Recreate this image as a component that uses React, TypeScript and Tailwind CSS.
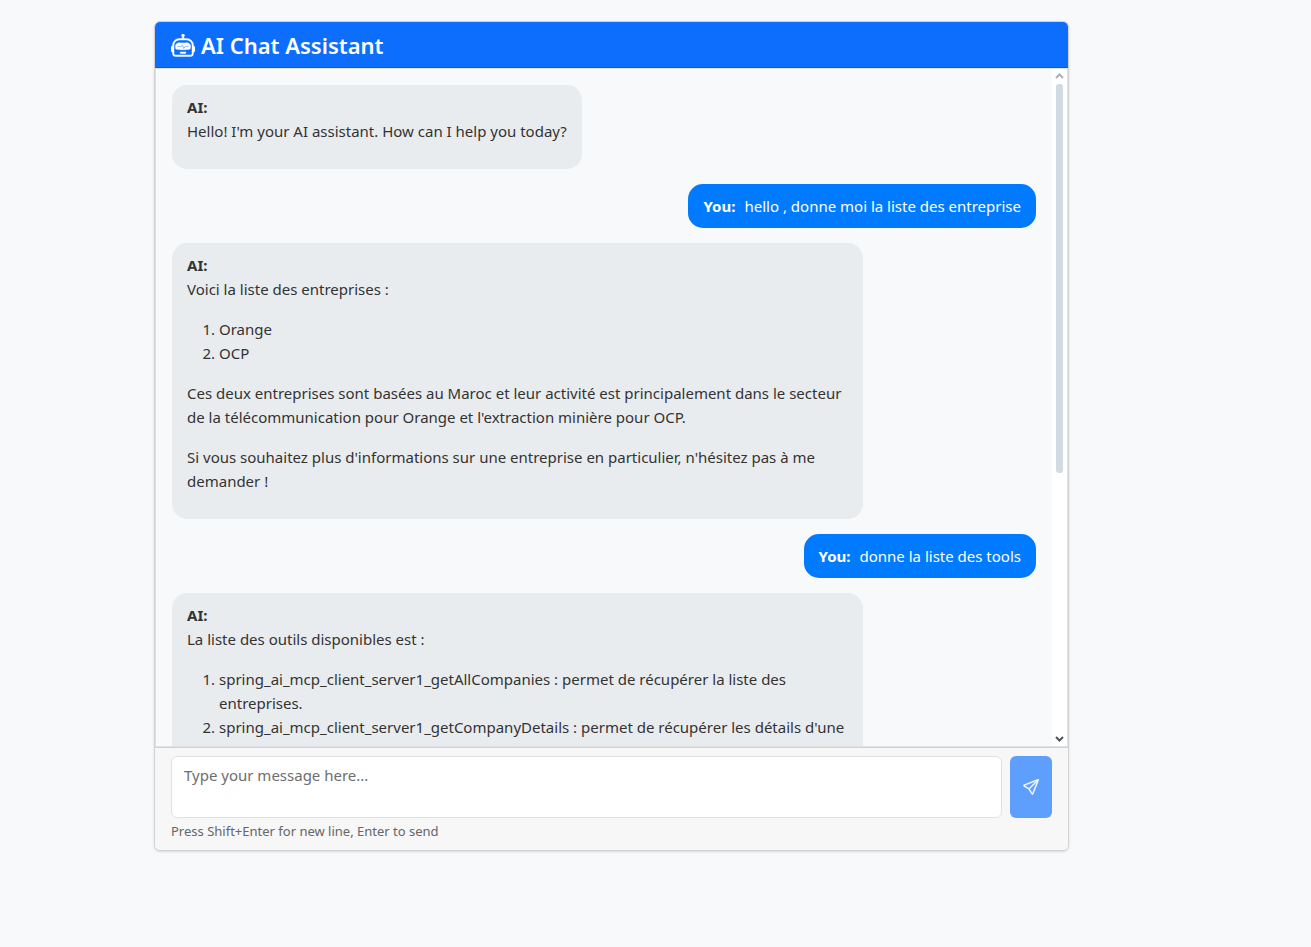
import React, { useState } from "react";
import { BsRobot, BsSend } from "react-icons/bs";

function AiMessage({ children }: { children: React.ReactNode }) {
  return (
    <article className="max-w-[80%] self-start rounded-[15px] bg-[#e9ecef] px-[15px] py-[10px] text-[#333333]">
      <strong className="block font-bold">AI:</strong>
      <div className="flex flex-col gap-4 pb-4">{children}</div>
    </article>
  );
}

function UserMessage({ children }: { children: React.ReactNode }) {
  return (
    <article className="flex max-w-[80%] gap-[9px] self-end rounded-[15px] bg-[#007bff] px-[15px] py-[10px] text-white">
      <strong className="font-bold">You:</strong>
      <p>{children}</p>
    </article>
  );
}

export default function App() {
  const [draft, setDraft] = useState("");
  return (
    <main className="min-h-screen bg-[#f8f9fa] pt-[21px] pr-6 pb-24 pl-[154px] font-['Noto_Sans','Open_Sans',sans-serif] text-[15px] leading-6">
      <section className="flex w-full max-w-[915px] flex-col overflow-hidden rounded-md border border-[#d0d2d4] bg-white shadow-sm">
        <header className="flex items-center gap-[6px] border-b border-[#0b5ed7] bg-[#0d6efd] px-4 pt-[9px] pb-[7px] text-white">
          <BsRobot size={24} strokeWidth={0.3} aria-hidden="true" />
          <h1 className="text-[22px] leading-[29px] font-semibold">AI Chat Assistant</h1>
        </header>

        <div className="flex h-[679px] border border-[#dee2e6] bg-[#f8f9fa]">
          <div className="min-w-0 flex-1 overflow-y-auto [scrollbar-width:none]">
            <div className="flex flex-col gap-[15px] p-4">
              <AiMessage>
                <p>Hello! I'm your AI assistant. How can I help you today?</p>
              </AiMessage>
              <UserMessage>hello , donne moi la liste des entreprise</UserMessage>
              <AiMessage>
                <p>Voici la liste des entreprises :</p>
                <ol className="list-decimal pl-8">
                  <li>Orange</li>
                  <li>OCP</li>
                </ol>
                <p>
                  Ces deux entreprises sont basées au Maroc et leur activité est principalement dans le secteur de la
                  télécommunication pour Orange et l'extraction minière pour OCP.
                </p>
                <p>
                  Si vous souhaitez plus d'informations sur une entreprise en particulier, n'hésitez pas à me demander !
                </p>
              </AiMessage>
              <UserMessage>donne la liste des tools</UserMessage>
              <AiMessage>
                <p>La liste des outils disponibles est :</p>
                <ol className="list-decimal pl-8">
                  <li>spring_ai_mcp_client_server1_getAllCompanies : permet de récupérer la liste des entreprises.</li>
                  <li>
                    spring_ai_mcp_client_server1_getCompanyDetails : permet de récupérer les détails d'une entreprise
                    spécifique.
                  </li>
                </ol>
              </AiMessage>
            </div>
          </div>
          <div className="flex w-[15px] shrink-0 flex-col items-center bg-white" aria-hidden="true">
            <svg width="15" height="15" viewBox="0 0 15 15" fill="none" stroke="#b0b0b0" strokeWidth="2">
              <path d="M4 9 7.5 5.5 11 9" />
            </svg>
            <div className="h-[389px] w-[7px] rounded-[3px] bg-[#d0dbe3]" />
            <svg className="mt-auto" width="15" height="15" viewBox="0 0 15 15" fill="none" stroke="#555555" strokeWidth="2">
              <path d="M4 6 7.5 9.5 11 6" />
            </svg>
          </div>
        </div>

        <footer className="border-t border-[#d0d2d4] bg-[#f7f7f7] px-4 py-2">
          <form className="flex gap-2" onSubmit={(e) => e.preventDefault()}>
            <textarea
              aria-label="Message"
              rows={2}
              value={draft}
              onChange={(e) => setDraft(e.target.value)}
              placeholder="Type your message here..."
              className="h-[62px] min-w-0 flex-1 resize-none rounded-md border border-[#dee2e6] bg-white px-3 py-[6px] text-[#212529] placeholder:text-[#6c6e70]"
            />
            <button
              type="submit"
              aria-label="Send"
              className="flex w-[42px] shrink-0 items-center justify-center rounded-md bg-[#5e9ffd] text-white"
            >
              <BsSend size={16} strokeWidth={0.4} aria-hidden="true" />
            </button>
          </form>
          <p className="mt-[3px] text-[13px] leading-[21px] text-[#646668]">
            Press Shift+Enter for new line, Enter to send
          </p>
        </footer>
      </section>
    </main>
  );
}
